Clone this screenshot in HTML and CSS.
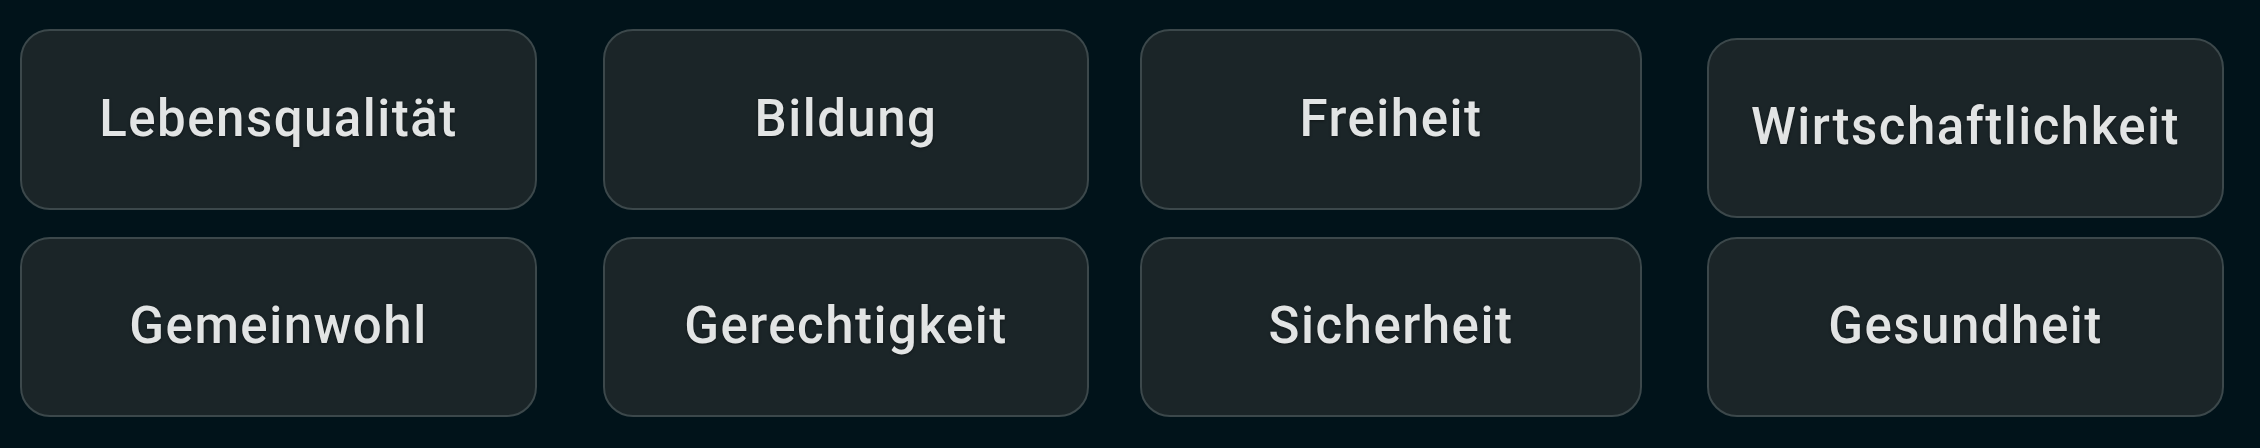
FILE: index.html
```html
<!DOCTYPE html>
<html lang="de">
<head>
    <meta charset="UTF-8">
    <meta name="viewport" content="width=device-width, initial-scale=1.0">
    <title>Werte</title>
    <link rel="stylesheet" href="styles.css">
</head>
<body>
    <div class="values">
        <div class="col col-1">
            <button class="tile tile-top">Lebensqualität</button>
            <button class="tile">Gemeinwohl</button>
        </div>
        <div class="col col-2">
            <button class="tile tile-top">Bildung</button>
            <button class="tile">Gerechtigkeit</button>
        </div>
        <div class="col col-3">
            <button class="tile tile-top">Freiheit</button>
            <button class="tile">Sicherheit</button>
        </div>
        <div class="col col-4">
            <button class="tile">Wirtschaftlichkeit</button>
            <button class="tile">Gesundheit</button>
        </div>
    </div>
</body>
</html>
```

FILE: styles.css
```css
body {
    margin: 0;
    padding: 29px 0 0 20px;
    background-color: #01131a;
    font-family: Roboto, "Noto Sans", sans-serif;
}

.values {
    display: flex;
}

.col {
    display: flex;
    flex-direction: column;
    gap: 27px;
}

.col-1 {
    width: 517px;
}

.col-2 {
    width: 486px;
    margin-left: 66px;
}

.col-3 {
    width: 502px;
    margin-left: 51px;
}

.col-4 {
    width: 517px;
    margin-left: 65px;
    padding-top: 9px;
    gap: 19px;
}

.tile {
    box-sizing: border-box;
    height: 180px;
    padding: 0 0 3px;
    border: 2px solid #3c484b;
    border-radius: 30px;
    background-color: #1b2528;
    color: #e2e4e4;
    font-family: inherit;
    font-size: 51px;
    font-weight: 500;
    letter-spacing: 1.5px;
    text-align: center;
    text-shadow: 0 1px 3px rgba(0, 0, 0, 0.45);
    cursor: pointer;
}

.tile-top {
    height: 181px;
}
```
